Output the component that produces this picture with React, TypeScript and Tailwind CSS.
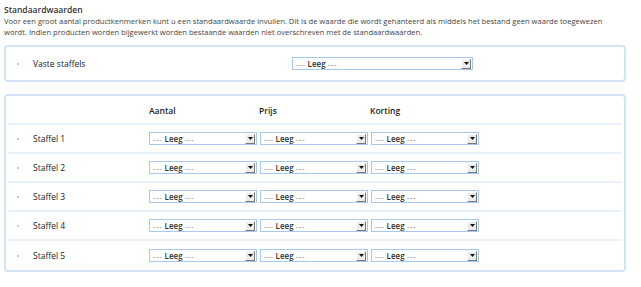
import React from 'react';

const font = { fontFamily: '"Open Sans", "Liberation Sans", sans-serif' };

const Select = ({ width }: { width: string }) => (
    <div className={`${width} h-[13px] border border-[#a9c9ec] bg-white flex items-center justify-between pl-[3px] pr-[1px]`}>
        <span className="text-[8px] leading-none text-[#333] whitespace-nowrap">
            <span className="text-[#777] tracking-[0.6px]">---</span> <span className="font-semibold">Leeg</span> <span className="text-[#777] tracking-[0.6px]">---</span>
        </span>
        <div className="w-[10px] h-[10px] bg-[#ececec] border-t border-l border-t-white border-l-white border-b border-r border-b-[#777] border-r-[#777] flex items-center justify-center">
            <svg width="5" height="3" viewBox="0 0 5 3"><path d="M0 0h5L2.5 3z" fill="#111" /></svg>
        </div>
    </div>
);

const Bullet = () => <span className="block w-[2px] h-[2px] bg-[#b5cfec]"></span>;

const App = () => {
    const rows = ['Staffel 1', 'Staffel 2', 'Staffel 3', 'Staffel 4', 'Staffel 5'];

    return (
        <div className="w-[641px] h-[287px] bg-white pl-[4px] pr-[15px] pt-[3px] text-[#333]" style={font}>
            {/* Header text */}
            <h2 className="text-[8.5px] leading-[13px] font-semibold text-[#333]">Standaardwaarden</h2>
            <p className="text-[7.6px] leading-[11px] text-[#444] whitespace-nowrap">
                Voor een groot aantal productkenmerken kunt u een standaardwaarde invullen. Dit is de waarde die wordt gehanteerd als middels het bestand geen waarde toegewezen
                <br />
                wordt. Indien producten worden bijgewerkt worden bestaande waarden niet overschreven met de standaardwaarden.
            </p>

            {/* Vaste staffels */}
            <div className="mt-[7px] h-[37px] border-2 border-[#d3e4f7] rounded-[4px] flex items-center">
                <div className="w-[27px] pl-[11px]"><Bullet /></div>
                <span className="text-[8.5px] leading-none font-medium text-[#222] w-[259px] pt-[1px]">Vaste staffels</span>
                <Select width="w-[181px]" />
            </div>

            {/* Staffels */}
            <div className="mt-[12px] border-2 border-[#d3e4f7] rounded-[4px]">
                <div className="h-[29px] mx-[2px] border-b-2 border-[#e9f1fb] flex items-center pt-[3px]">
                    <div className="w-[141px]"></div>
                    <span className="text-[8.5px] font-semibold text-[#222] w-[110px]">Aantal</span>
                    <span className="text-[8.5px] font-semibold text-[#222] w-[111px]">Prijs</span>
                    <span className="text-[8.5px] font-semibold text-[#222]">Korting</span>
                </div>
                {rows.map((row, i) => (
                    <div key={row} className={`h-[29px] mx-[2px] flex items-center ${i < rows.length - 1 ? 'border-b-2 border-[#e9f1fb]' : ''}`}>
                        <div className="w-[25px] pl-[9px]"><Bullet /></div>
                        <span className="text-[8.5px] leading-none font-medium text-[#222] w-[116px] pt-[1px]">{row}</span>
                        <div className="flex gap-[3px]">
                            <Select width="w-[108px]" />
                            <Select width="w-[108px]" />
                            <Select width="w-[108px]" />
                        </div>
                    </div>
                ))}
            </div>
        </div>
    );
};

export default App;
